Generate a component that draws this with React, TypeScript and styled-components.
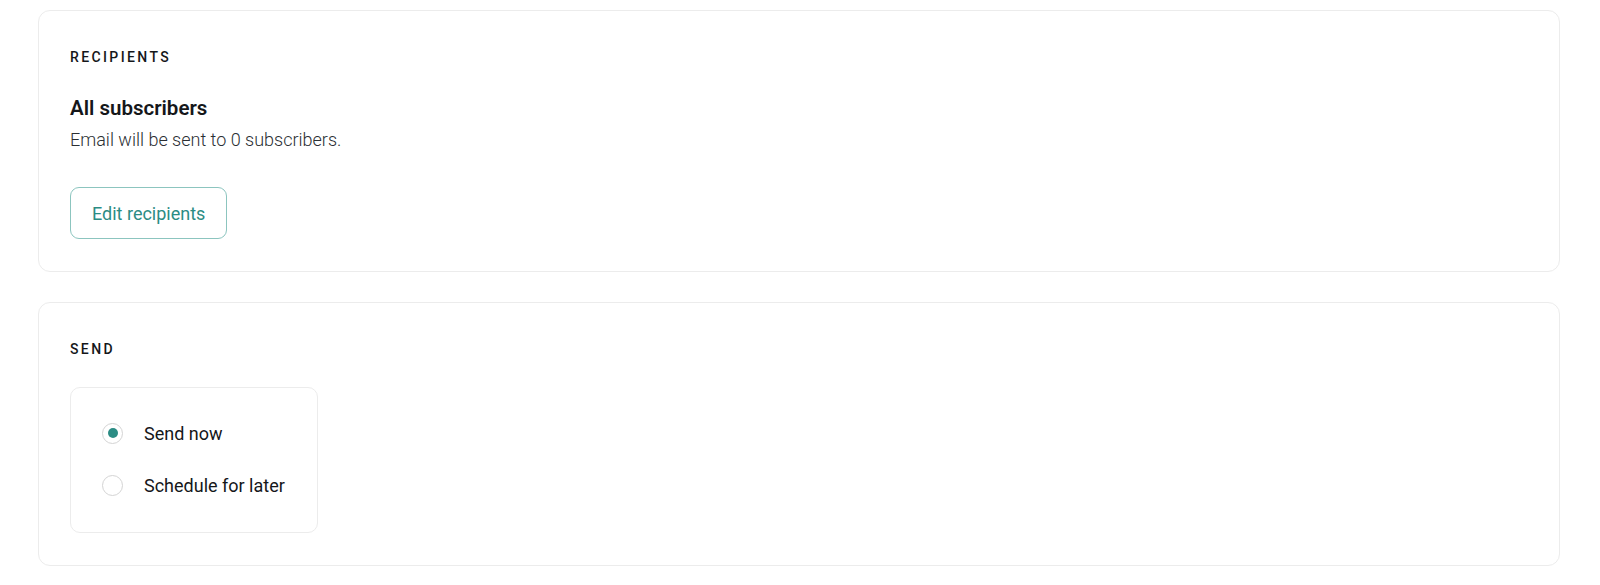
import React, { useState } from 'react'
import styled, { createGlobalStyle } from 'styled-components'

const GlobalStyle = createGlobalStyle`
  body {
    margin: 0;
    background: #ffffff;
    font-family: Roboto, "Liberation Sans", Arial, sans-serif;
    color: #15171a;
  }
`

const Page = styled.div`
  display: flex;
  flex-direction: column;
  gap: 30px;
  padding: 10px 40px 20px 38px;
`

const Card = styled.section`
  border: 1px solid #ececec;
  border-radius: 12px;
  padding: 37px 31px 32px 31px;
  background: #fff;
`

const SectionTitle = styled.h3`
  margin: 0;
  font-size: 14px;
  line-height: 18px;
  font-weight: 500;
  letter-spacing: 0.17em;
  text-transform: uppercase;
  color: #15171a;
`

const Heading = styled.div`
  margin-top: 29px;
  font-size: 20.5px;
  line-height: 26px;
  font-weight: 600;
  color: #15171a;
`

const Hint = styled.p`
  margin: 6px 0 0 0;
  font-size: 18px;
  line-height: 26px;
  font-weight: 300;
  color: #2b2f33;
`

const OutlineButton = styled.button`
  display: block;
  margin-top: 34px;
  height: 52px;
  padding: 0 21px;
  border: 1px solid #8cc5bf;
  border-radius: 9px;
  background: #fff;
  color: #2b8c84;
  font-family: inherit;
  font-size: 18px;
  font-weight: 400;
  cursor: pointer;
`

const OptionBox = styled.div`
  margin-top: 29px;
  display: inline-flex;
  flex-direction: column;
  gap: 26px;
  padding: 32px 32px 34px 31px;
  border: 1px solid #ececec;
  border-radius: 10px;
`

const Option = styled.label`
  display: flex;
  align-items: center;
  gap: 21px;
  height: 26px;
  font-size: 18px;
  color: #15171a;
  cursor: pointer;
`

const Dot = styled.span<{ $on: boolean }>`
  box-sizing: border-box;
  width: 21px;
  height: 21px;
  border-radius: 50%;
  border: 1px solid #d4d4d4;
  display: flex;
  align-items: center;
  justify-content: center;

  &::after {
    content: '';
    width: 10px;
    height: 10px;
    border-radius: 50%;
    background: ${p => (p.$on ? '#2b8c84' : 'transparent')};
  }
`

const options = ['Send now', 'Schedule for later']

export default function App() {
  const [picked, setPicked] = useState(0)

  return (
    <>
      <GlobalStyle />
      <Page>
        <Card>
          <SectionTitle>Recipients</SectionTitle>
          <Heading>All subscribers</Heading>
          <Hint>Email will be sent to 0 subscribers.</Hint>
          <OutlineButton>Edit recipients</OutlineButton>
        </Card>
        <Card>
          <SectionTitle>Send</SectionTitle>
          <OptionBox>
            {options.map((o, i) => (
              <Option key={o} onClick={() => setPicked(i)}>
                <Dot $on={picked === i} />
                {o}
              </Option>
            ))}
          </OptionBox>
        </Card>
      </Page>
    </>
  )
}
